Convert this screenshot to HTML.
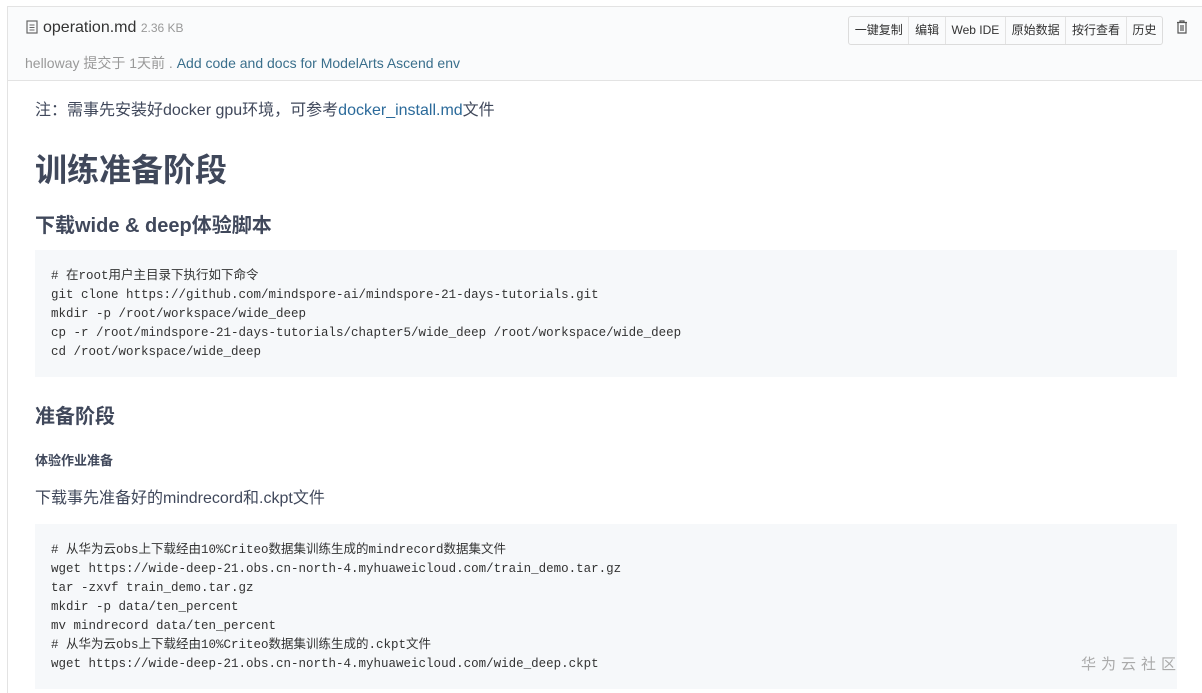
<!DOCTYPE html>
<html><head><meta charset="utf-8"><style>
*{margin:0;padding:0;box-sizing:border-box}
html,body{width:1202px;height:693px;overflow:hidden}
body{background:#fff;font-family:"Liberation Sans","Noto Sans CJK SC",sans-serif;position:relative;color:#40485b}
.box{position:absolute;left:7px;top:6px;width:1195px;height:687px;border-left:1px solid #e3e3e3;border-top:1px solid #e3e3e3}
.hdr{position:absolute;left:8px;top:7px;width:1194px;height:74px;background:#fafbfc;border-bottom:1px solid #e3e3e3}
.a{position:absolute;white-space:nowrap}
.btns{position:absolute;left:848px;top:16px;height:29px;border:1px solid #dcdcdc;border-radius:3px;background:#fafbfc;display:flex;font-size:12px;color:#333}
.btns span{padding:0 5.7px;line-height:27px;border-left:1px solid #e3e3e3}
.btns span:first-child{border-left:none}
.code{position:absolute;left:35px;width:1142px;background:#f6f8fa;font-family:"Liberation Mono","Noto Sans CJK SC",monospace;font-size:12.5px;line-height:19px;color:#333;padding:0 16px;white-space:pre;overflow:hidden}
</style></head><body>
<div class="box"></div>
<div class="hdr"></div>
<svg class="a" style="left:26px;top:20px" width="12" height="14" viewBox="0 0 12 14"><rect x="1" y="1" width="10" height="12" fill="none" stroke="#666" stroke-width="1.2"/><path d="M3.5 5h5M3.5 7.5h5M3.5 10h5" stroke="#666" stroke-width="1"/></svg>
<div class="a" style="left:43px;top:19px;font-size:16px;color:#333">operation.md <span style="font-size:12px;color:#999">2.36 KB</span></div>
<div class="a" style="left:25px;top:53px;font-size:14px;color:#999">helloway 提交于 1天前 . <span style="color:#3a6f8c">Add code and docs for ModelArts Ascend env</span></div>
<div class="btns"><span>一键复制</span><span>编辑</span><span>Web IDE</span><span>原始数据</span><span>按行查看</span><span>历史</span></div>
<svg class="a" style="left:1176px;top:20px" width="12" height="14" viewBox="0 0 12 14"><path d="M1 2.5h10M4 2.5V1h4v1.5M2 2.5v10.5h8V2.5M5 5v6M7 5v6" fill="none" stroke="#555" stroke-width="1.2"/></svg>
<div class="a" style="left:35px;top:96px;font-size:16px;color:#40485b">注：需事先安装好docker gpu环境，可参考<span style="color:#2b6a9a">docker_install.md</span>文件</div>
<div class="a" style="left:35px;top:145px;font-size:32px;font-weight:bold;color:#40485b">训练准备阶段</div>
<div class="a" style="left:35px;top:209px;font-size:20px;font-weight:bold;color:#40485b">下载wide &amp; deep体验脚本</div>
<div class="code" style="top:250px;height:127px;padding-top:17px"># 在root用户主目录下执行如下命令
git clone https://github.com/mindspore-ai/mindspore-21-days-tutorials.git
mkdir -p /root/workspace/wide_deep
cp -r /root/mindspore-21-days-tutorials/chapter5/wide_deep /root/workspace/wide_deep
cd /root/workspace/wide_deep</div>
<div class="a" style="left:35px;top:400px;font-size:20px;font-weight:bold;color:#40485b">准备阶段</div>
<div class="a" style="left:35px;top:450px;font-size:13px;font-weight:bold;color:#40485b">体验作业准备</div>
<div class="a" style="left:35px;top:484px;font-size:16px;color:#40485b">下载事先准备好的mindrecord和.ckpt文件</div>
<div class="code" style="top:524px;height:165px;padding-top:17px"># 从华为云obs上下载经由10%Criteo数据集训练生成的mindrecord数据集文件
wget https://wide-deep-21.obs.cn-north-4.myhuaweicloud.com/train_demo.tar.gz
tar -zxvf train_demo.tar.gz
mkdir -p data/ten_percent
mv mindrecord data/ten_percent
# 从华为云obs上下载经由10%Criteo数据集训练生成的.ckpt文件
wget https://wide-deep-21.obs.cn-north-4.myhuaweicloud.com/wide_deep.ckpt</div>
<div class="a" style="left:1081px;top:656px;font-size:15px;color:#aaa;letter-spacing:5px;line-height:18px">华为云社区</div>
</body></html>
